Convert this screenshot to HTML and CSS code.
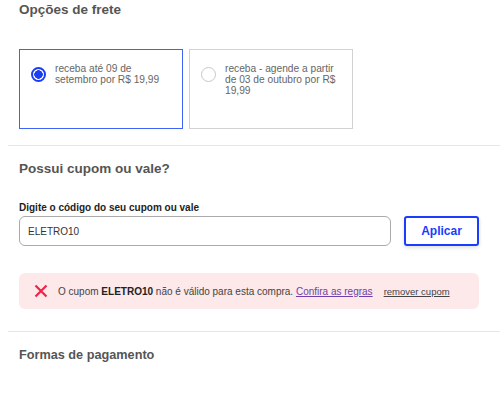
FILE: index.html
```html
<!DOCTYPE html>
<html lang="pt-BR">
<head>
    <meta charset="UTF-8">
    <meta name="viewport" content="width=device-width, initial-scale=1.0">
    <title>Checkout</title>
    <link rel="stylesheet" href="styles.css">
</head>
<body>

<div class="page">
    <section class="section frete">
        <h2 class="title">Opções de frete</h2>
        <div class="cards">
            <label class="card selected">
                <span class="radio"></span>
                <span class="card-text">receba até 09 de setembro por R$ 19,99</span>
            </label>
            <label class="card">
                <span class="radio"></span>
                <span class="card-text">receba - agende a partir de 03 de outubro por R$ 19,99</span>
            </label>
        </div>
    </section>

    <section class="section cupom">
        <h2 class="title">Possui cupom ou vale?</h2>
        <label class="field-label" for="cupom">Digite o código do seu cupom ou vale</label>
        <div class="field-row">
            <input type="text" id="cupom" class="field" value="ELETRO10">
            <button class="btn">Aplicar</button>
        </div>
        <div class="alert">
            <svg class="alert-icon" width="14" height="14" viewBox="0 0 14 14">
                <path d="M1.5 1.5 L12.5 12.5 M12.5 1.5 L1.5 12.5" stroke="#ee2449" stroke-width="2.2" fill="none"/>
            </svg>
            <span class="alert-text">O cupom <b>ELETRO10</b> não é válido para esta compra. <a href="#" class="rules">Confira as regras</a></span>
            <a href="#" class="remove">remover cupom</a>
        </div>
    </section>

    <section class="section pagamento">
        <h2 class="title small">Formas de pagamento</h2>
    </section>
</div>

</body>
</html>
```

FILE: styles.css
```css
body {
    margin: 0;
    font-family: "Liberation Sans", Arial, sans-serif;
    background: #ffffff;
    color: #555555;
}
.page {
    margin-left: 8px;
}
.section {
    padding: 0 21px 0 11px;
    border-bottom: 1px solid #e6e6e6;
}
.section:last-child {
    border-bottom: none;
}
.title {
    margin: 0;
    font-size: 13.5px;
    font-weight: bold;
    color: #555555;
}
.title.small {
    font-size: 12.7px;
}
.frete {
    padding-top: 2px;
    padding-bottom: 16px;
}
.cards {
    display: flex;
    gap: 6px;
    margin-top: 32px;
}
.card {
    box-sizing: border-box;
    width: 164px;
    height: 80px;
    border: 1px solid #d2d2d2;
    display: flex;
    align-items: flex-start;
    gap: 9px;
    padding: 13px 10px 0 11px;
}
.card.selected {
    border-color: #3f63f7;
}
.radio {
    flex: none;
    box-sizing: border-box;
    width: 15px;
    height: 15px;
    margin-top: 4px;
    border: 1px solid #c8c8c8;
    border-radius: 50%;
}
.selected .radio {
    border: 2px solid #1b3df5;
    background: radial-gradient(circle, #1b3df5 0 4px, #ffffff 4.5px);
}
.card-text {
    display: block;
    flex: none;
    width: 118px;
    font-size: 10.2px;
    line-height: 11px;
    color: #666666;
    text-wrap: wrap;
}
.cupom {
    padding-top: 15px;
    padding-bottom: 22px;
}
.field-label {
    display: block;
    margin-top: 26px;
    font-size: 10px;
    font-weight: bold;
    color: #222222;
}
.field-row {
    display: flex;
    align-items: center;
    gap: 13px;
    margin-top: 3px;
}
.field {
    box-sizing: border-box;
    width: 372px;
    height: 30px;
    border: 1px solid #aaaaaa;
    border-radius: 6px;
    padding: 0 8px;
    font-family: inherit;
    font-size: 10px;
    color: #333333;
}
.btn {
    box-sizing: border-box;
    width: 75px;
    height: 30px;
    background: #ffffff;
    border: 2px solid #1a3cff;
    border-radius: 3px;
    box-shadow: 0 2px 4px rgba(0, 0, 0, 0.12);
    color: #1a3cff;
    font-family: inherit;
    font-size: 12px;
    font-weight: bold;
}
.alert {
    display: flex;
    align-items: center;
    height: 36px;
    margin-top: 27px;
    padding: 0 15px;
    background: #fde8ea;
    border-radius: 6px;
    font-size: 10px;
    color: #444444;
    white-space: nowrap;
}
.alert-icon {
    flex: none;
    margin-right: 10px;
}
.alert-text b {
    color: #222222;
}
.rules {
    color: #7040a8;
}
.remove {
    margin-left: 11px;
    font-size: 9.5px;
    color: #444444;
}
.pagamento {
    padding-top: 16px;
    height: 50px;
}
```
